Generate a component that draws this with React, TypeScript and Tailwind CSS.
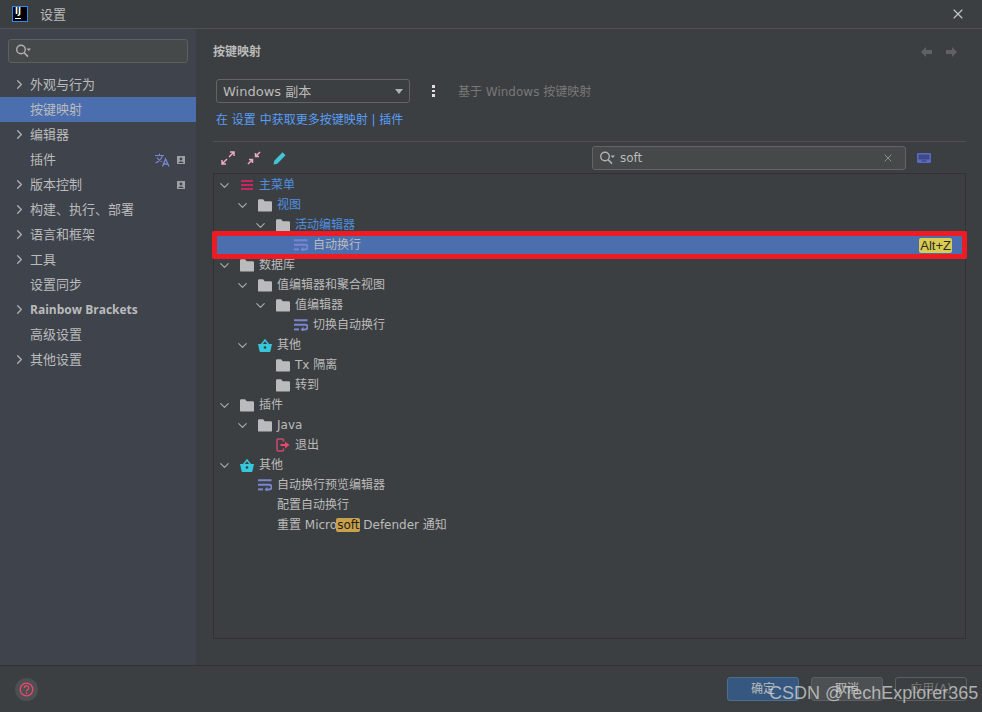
import { ChevronDown, ChevronRight, X } from "lucide-react";
import type { ReactNode } from "react";

const font = "font-['DejaVu_Sans','Noto_Sans_CJK_SC',sans-serif]";

function SearchIcon() {
  return (
    <svg width="18" height="14" viewBox="0 0 18 14" fill="none" className="shrink-0">
      <circle cx="5" cy="5.5" r="4.3" stroke="#afb1b3" strokeWidth="1.4" />
      <path d="M8.2 8.7L12 12.6" stroke="#afb1b3" strokeWidth="1.6" />
      <path d="M10.5 4.5h4.5l-2.2 2.4z" fill="#afb1b3" />
    </svg>
  );
}

function FolderIcon() {
  return (
    <svg width="14" height="13" viewBox="0 0 14 13">
      <path d="M0 1.5a1.2 1.2 0 0 1 1.2-1.2h3.9l1.6 1.9h6.1a1.2 1.2 0 0 1 1.2 1.2v8a1.2 1.2 0 0 1-1.2 1.2H1.2A1.2 1.2 0 0 1 0 11.400z" fill="#b9bbbc" />
    </svg>
  );
}

function WrapIcon() {
  return (
    <svg width="14" height="12" viewBox="0 0 14 12" fill="none">
      <path d="M0 1.3h13.5M0 5.800h11.300a2.200 2.200 0 0 1 0 4.600H9" stroke="#7a86cf" strokeWidth="2" />
      <path d="M0 10.400h5" stroke="#7a86cf" strokeWidth="2" />
      <path d="M9.500 7.800v5.200L6.500 10.400z" fill="#7a86cf" />
    </svg>
  );
}

function MenuIcon() {
  return (
    <svg width="14" height="10" viewBox="0 0 14 10">
      <path d="M1 0h12v2H1zM1 4h12v2H1zM1 8h12v2H1z" fill="#c9255f" />
    </svg>
  );
}

function BasketIcon() {
  return (
    <svg width="14" height="13" viewBox="0 0 14 13" fill="none">
      <path d="M0 5h14l-1.6 7.300a1 1 0 0 1-1 .7H2.600a1 1 0 0 1-1-.7z" fill="#37c6dc" />
      <path d="M3.500 5.500L7 1l3.500 4.500" stroke="#37c6dc" strokeWidth="1.5" />
      <circle cx="7" cy="8.500" r="1.300" fill="#3c3f41" />
    </svg>
  );
}

function ExitIcon() {
  return (
    <svg width="14" height="14" viewBox="0 0 14 14" fill="none">
      <path d="M7.500 3.500V2a1 1 0 0 0-1-1H2a1 1 0 0 0-1 1v10a1 1 0 0 0 1 1h4.500a1 1 0 0 0 1-1v-1.500" stroke="#c9486e" strokeWidth="1.600" />
      <path d="M4.500 7h5" stroke="#f0466e" strokeWidth="2" />
      <path d="M9 3.500L13.500 7 9 10.500z" fill="#f0466e" />
    </svg>
  );
}

function ProfileBadge() {
  return (
    <svg width="8" height="8" viewBox="0 0 8 8">
      <path d="M0 0h8v8H0z" fill="#9ea1a3" />
      <circle cx="4" cy="3" r="1.400" fill="#3e434c" />
      <path d="M1.500 7c0-2 5-2 5 0z" fill="#3e434c" />
    </svg>
  );
}

function TranslateIcon() {
  return (
    <svg width="15" height="14" viewBox="0 0 15 14" fill="none">
      <path d="M0 2.500h9M4.500 0.500v2M7.500 2.500C6.500 6 4 8.500 0.500 10M2 4.500c1 2 3 3.500 5 4.200" stroke="#7a86cf" strokeWidth="1.100" />
      <path d="M7.500 13.500L10.500 6l3.500 7.500M8.800 11h4" stroke="#7a86cf" strokeWidth="1.300" />
    </svg>
  );
}

type SideItem = { label: string; arrow?: boolean; selected?: boolean; bold?: boolean; translate?: boolean; badge?: boolean };

const sideItems: SideItem[] = [
  { label: "外观与行为", arrow: true },
  { label: "按键映射", selected: true },
  { label: "编辑器", arrow: true },
  { label: "插件", translate: true, badge: true },
  { label: "版本控制", arrow: true, badge: true },
  { label: "构建、执行、部署", arrow: true },
  { label: "语言和框架", arrow: true },
  { label: "工具", arrow: true },
  { label: "设置同步" },
  { label: "Rainbow Brackets", arrow: true, bold: true },
  { label: "高级设置" },
  { label: "其他设置", arrow: true },
];

function Sidebar() {
  return (
    <aside className="w-[196px] shrink-0 bg-[#3e434c] flex flex-col">
      <div className="mt-[10px] mx-2 h-6 flex items-center pl-[7px] rounded-[3px] border border-[#5e6060] bg-[#45494a]">
        <SearchIcon />
      </div>
      <nav className="mt-[9px]">
        {sideItems.map((item) => (
          <div
            key={item.label}
            className={`h-[25px] flex items-center pl-[14px] pr-[11px] text-[13px] text-[#bbbbbb] ${item.selected ? "bg-[#4b6eaf]" : ""}`}
          >
            <span className="w-4 shrink-0">
              {item.arrow && <ChevronRight size={15} strokeWidth={2} className="text-[#afb1b3] -ml-[2px]" />}
            </span>
            <span className={`flex-1 ${item.bold ? "font-['Open_Sans',sans-serif] font-bold text-[12px]" : ""}`}>{item.label}</span>
            {item.translate && <span className="mr-[7px] flex"><TranslateIcon /></span>}
            {item.badge && <ProfileBadge />}
          </div>
        ))}
      </nav>
    </aside>
  );
}

type TreeNode = { label: ReactNode; level: number; open?: boolean; icon?: ReactNode; blue?: boolean; selected?: boolean };

const indent = ["pl-[1px]", "pl-[19px]", "pl-[37px]", "pl-[55px]"];

const tree: TreeNode[] = [
  { label: "主菜单", level: 0, open: true, icon: <MenuIcon />, blue: true },
  { label: "视图", level: 1, open: true, icon: <FolderIcon />, blue: true },
  { label: "活动编辑器", level: 2, open: true, icon: <FolderIcon />, blue: true },
  { label: "自动换行", level: 3, icon: <WrapIcon />, selected: true },
  { label: "数据库", level: 0, open: true, icon: <FolderIcon /> },
  { label: "值编辑器和聚合视图", level: 1, open: true, icon: <FolderIcon /> },
  { label: "值编辑器", level: 2, open: true, icon: <FolderIcon /> },
  { label: "切换自动换行", level: 3, icon: <WrapIcon /> },
  { label: "其他", level: 1, open: true, icon: <BasketIcon /> },
  { label: "Tx 隔离", level: 2, icon: <FolderIcon /> },
  { label: "转到", level: 2, icon: <FolderIcon /> },
  { label: "插件", level: 0, open: true, icon: <FolderIcon /> },
  { label: "Java", level: 1, open: true, icon: <FolderIcon /> },
  { label: "退出", level: 2, icon: <ExitIcon /> },
  { label: "其他", level: 0, open: true, icon: <BasketIcon /> },
  { label: "自动换行预览编辑器", level: 1, icon: <WrapIcon /> },
  { label: "配置自动换行", level: 1 },
  {
    label: (
      <>
        重置 Micro<span className="bg-[#c9a14a] text-[#1f1f1f] rounded-[2px] -mx-px px-px">soft</span> Defender 通知
      </>
    ),
    level: 1,
  },
];

function TreeRow({ node }: { node: TreeNode }) {
  return (
    <div className={`relative h-5 flex items-center text-[12px] ${indent[node.level]} ${node.selected ? "bg-[#4b6eaf]" : ""}`}>
      <span className="w-[18px] flex justify-center shrink-0">
        {node.open && <ChevronDown size={15} strokeWidth={2} className="text-[#a4a6a8]" />}
      </span>
      <span className="w-[26px] flex justify-end pr-[5px] shrink-0">{node.icon}</span>
      <span className={node.blue ? "text-[#4f8fe0]" : "text-[#bbbbbb]"}>{node.label}</span>
      {node.selected && (
        <span className="ml-auto mr-[13px] px-px bg-[#d9cc50] text-[#2b2b2b] font-['Liberation_Sans',sans-serif] text-[13px] rounded-[2px] leading-[15px]">Alt+Z</span>
      )}
    </div>
  );
}

export default function App() {
  return (
    <div className={`relative w-screen h-screen flex flex-col overflow-hidden bg-[#3c3f41] text-[#bbbbbb] ${font}`}>
      <header className="h-[29px] shrink-0 flex items-center border-b border-[#515151] pl-3 pr-[16px]">
        <div className="w-[16px] h-[16px] mb-[1px] bg-black border border-[#2a8cf0] flex flex-col items-start pl-[2px] pt-[1px]">
          <span className="text-[8px] leading-[8px] font-bold text-white">IJ</span>
          <span className="w-[6px] h-px bg-white mt-[2px]" />
        </div>
        <span className="ml-3 text-[13px] pt-px">设置</span>
        <X size={16} strokeWidth={1.6} className="ml-auto text-[#c8c8c8]" />
      </header>

      <div className="flex-1 flex min-h-0">
        <Sidebar />
        <main className="flex-1 flex flex-col pl-[17px] pr-4 min-w-0">
          <div className="h-[46px] flex items-center justify-between pr-[9px]">
            <h1 className="text-[12px] font-bold">按键映射</h1>
            <div className="flex gap-[14px] text-[#5f6163]">
              <svg width="11" height="10" viewBox="0 0 11 10"><path d="M0 5l5-5v3h6v4H5v3z" fill="currentColor" /></svg>
              <svg width="11" height="10" viewBox="0 0 11 10"><path d="M11 5L6 0v3H0v4h6v3z" fill="currentColor" /></svg>
            </div>
          </div>

          <div className="mt-[4px] flex items-center pl-[3px]">
            <div className="w-[194px] h-6 rounded-[3px] border border-[#646464] flex items-center justify-between pl-[6px] pr-[6px] text-[13px]">
              <span className="pt-px">Windows 副本</span>
              <span className="w-0 h-0 border-x-[4px] border-x-transparent border-t-[5px] border-t-[#afb1b3]" />
            </div>
            <div className="ml-[22px] flex flex-col gap-[2px]">
              <span className="w-[3px] h-[2.5px] bg-[#e0e0e0]" />
              <span className="w-[3px] h-[2.5px] bg-[#e0e0e0]" />
              <span className="w-[3px] h-[2.5px] bg-[#e0e0e0]" />
            </div>
            <span className="ml-[23px] pt-px text-[12px] text-[#787878]">基于 Windows 按键映射</span>
          </div>

          <p className="mt-[8px] pl-[3px] text-[12px] leading-[18px] text-[#589df6]">在 设置 中获取更多按键映射 | 插件</p>

          <div className="mt-[12px] h-px bg-[#515151]" />

          <div className="mt-[4px] h-6 flex items-center">
            <div className="flex items-center gap-[12px] pl-[8px]">
              <svg width="14" height="14" viewBox="0 0 14 14" fill="none" stroke="#eba9c4" strokeWidth="1.500">
                <path d="M8 6l5-5M9 1h4v4M6 8l-5 5M1 9v4h4" />
              </svg>
              <svg width="14" height="14" viewBox="0 0 14 14" fill="none" stroke="#eba9c4" strokeWidth="1.500">
                <path d="M13 1L8.500 5.500M8.500 2v3.500H12M1 13l4.500-4.500M2 8.500h3.500V12" />
              </svg>
              <svg width="14" height="14" viewBox="0 0 14 14">
                <path d="M0.500 13.500l.8-3.700L9.500 1.300l3 3-8.200 8.400z" fill="#43c5d8" />
              </svg>
            </div>
            <div className="ml-auto mr-[11px] w-[314px] h-6 rounded-[3px] border border-[#646464] bg-[#45494a] flex items-center pl-[7px] pr-2 text-[12px]">
              <SearchIcon />
              <span className="ml-[2px]">soft</span>
              <X size={12} strokeWidth={1.6} className="ml-auto mr-[3px] text-[#9aa0a3]" />
            </div>
            <svg width="14" height="10" viewBox="0 0 14 10" className="mr-[35px]">
              <rect width="14" height="10" rx="1" fill="#5c6bc0" />
              <rect x="1.500" y="1.500" width="11" height="5" fill="#3c4a8a" />
              <rect x="4.500" y="7.500" width="5" height="1" fill="#2f3a6e" />
            </svg>
          </div>

          <section className="mt-[3px] h-[466px] border border-[#323232] pt-[1px]">
            {tree.map((node, i) => (
              <TreeRow key={i} node={node} />
            ))}
          </section>
        </main>
      </div>

      <footer className="h-[47px] shrink-0 border-t border-[#323232] flex items-center pl-[15px] pr-[15px] text-[12px]">
        <div className="w-[23px] h-[23px] rounded-full bg-[#4c5052] flex items-center justify-center">
          <svg width="15" height="15" viewBox="0 0 15 15" fill="none" stroke="#f0466e" strokeWidth="1.300">
            <circle cx="7.500" cy="7.500" r="6.300" />
            <path d="M5.300 6a2.200 2.200 0 1 1 3.400 1.800c-.8.500-1.200.9-1.200 1.700M7.500 10.600v1.400" />
          </svg>
        </div>
        <div className="ml-auto flex gap-3">
          <button className="w-[72px] h-6 rounded-[3px] border border-[#4c708c] bg-[#365880] text-[#bbbbbb]">确定</button>
          <button className="w-[72px] h-6 rounded-[3px] border border-[#5e6060] bg-[#4c5052] text-[#bbbbbb]">取消</button>
          <button className="w-[72px] h-6 rounded-[3px] border border-[#5e6060] text-[#777777]">应用(A)</button>
        </div>
      </footer>

      {/* red annotation drawn over the screenshot */}
      <div className="absolute left-[212px] top-[231px] w-[755px] h-[28px] border-[5px] border-[#ed1c24] rounded-[2px] pointer-events-none" />
      {/* CSDN watermark */}
      <span className="absolute left-[769px] top-[682px] text-[18px] leading-[22px] font-['Liberation_Sans',sans-serif] text-[#d6d6d6]/75 whitespace-nowrap">
        CSDN @TechExplorer365
      </span>
    </div>
  );
}
